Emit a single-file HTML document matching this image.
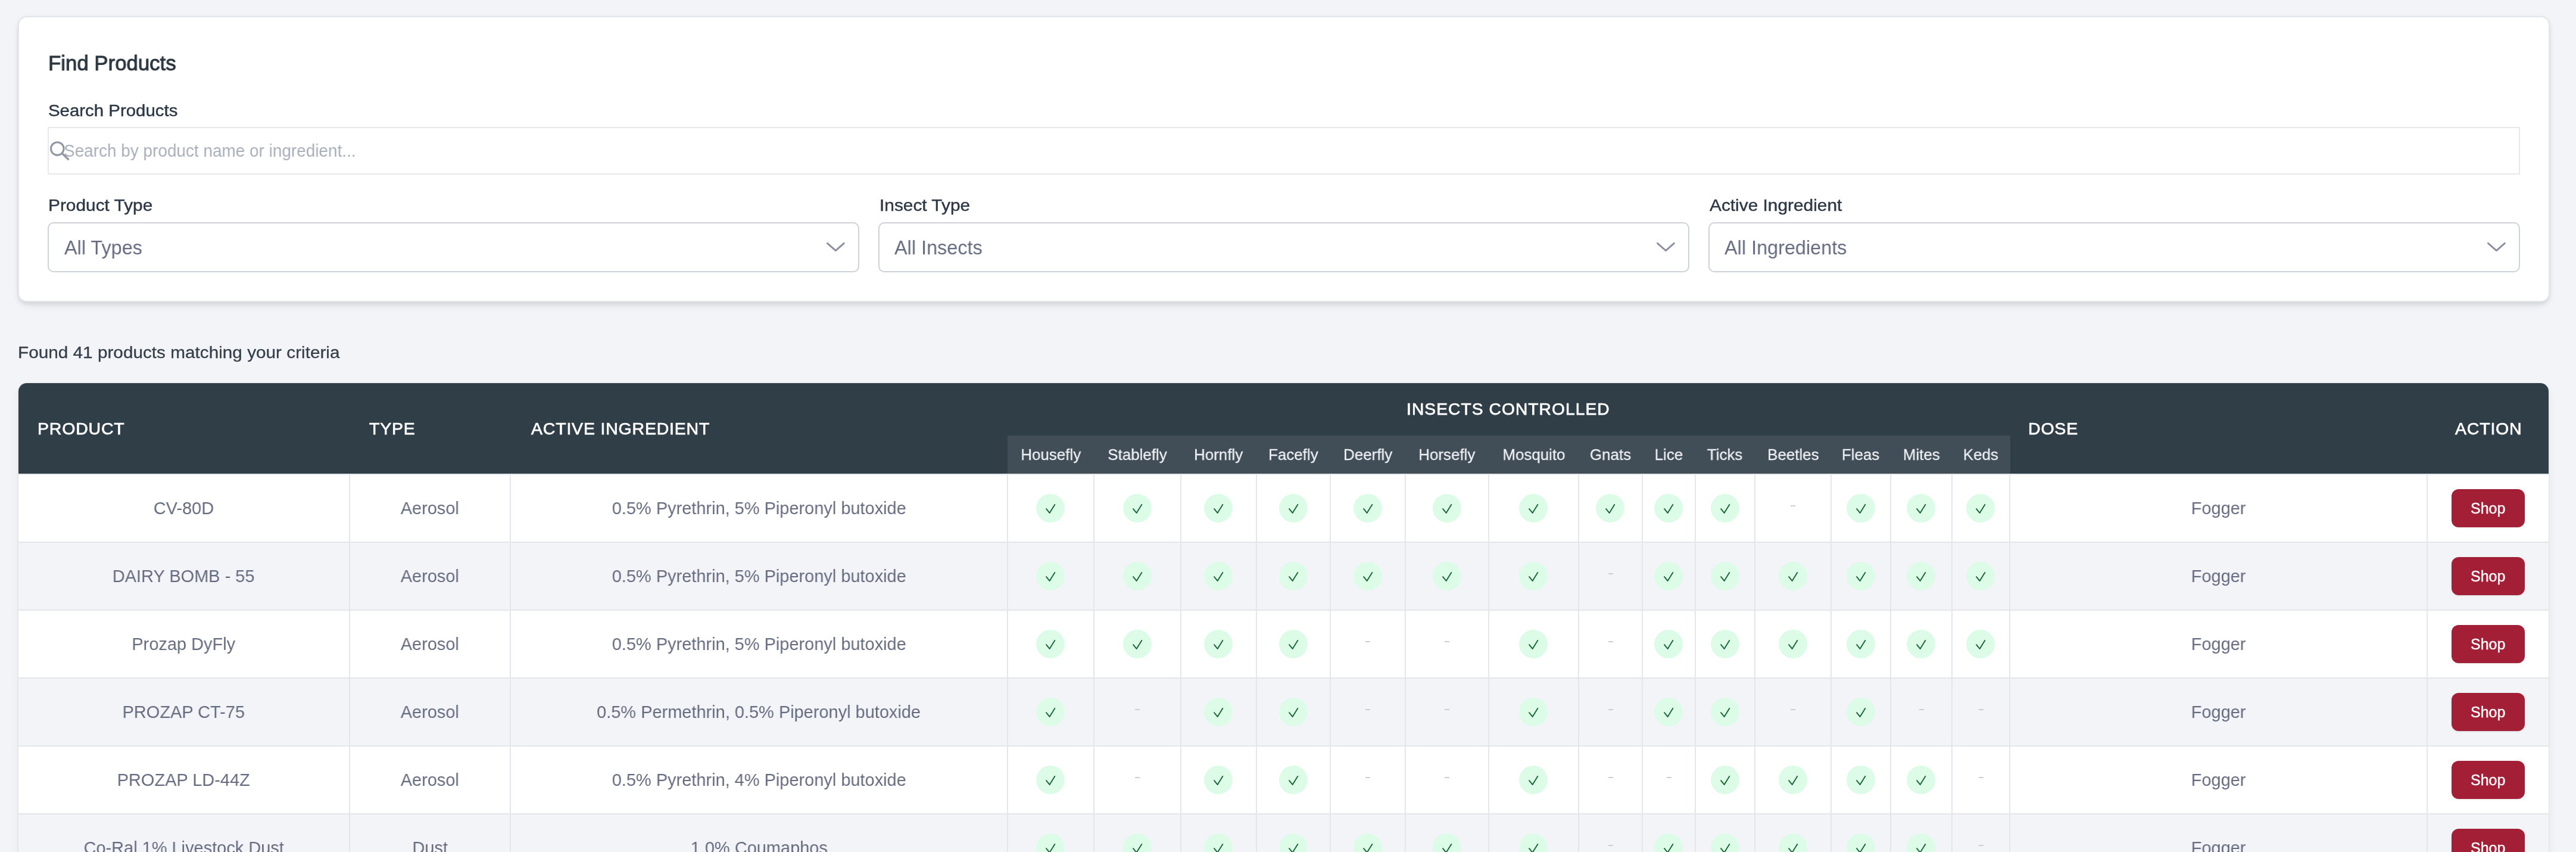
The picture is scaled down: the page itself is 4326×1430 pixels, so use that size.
<!DOCTYPE html><html><head><meta charset="utf-8"><title>Find Products</title><style>*{box-sizing:border-box;margin:0;padding:0}
span{will-change:transform}
html,body{width:4326px;height:1430px;overflow:hidden;background:#f3f4f8;font-family:"Liberation Sans",sans-serif;position:relative}
.t{position:absolute;line-height:1;white-space:nowrap;transform-origin:0 0}
.card{position:absolute;left:30px;top:27px;width:4252px;height:480px;background:#fff;border:2px solid #e2e5ea;border-radius:15px;box-shadow:0 5px 8px -2px rgba(15,23,42,0.10),0 10px 18px -6px rgba(15,23,42,0.07),0 0 10px rgba(15,23,42,0.035)}
.search{position:absolute;left:80px;top:213px;width:4152px;height:80px;border:2px solid #e6e8ed}
.sicon{position:absolute;left:82px;top:235px}
.sel{position:absolute;top:373px;height:84px;border:2px solid #cdd1d8;border-radius:10px}
.chev{position:absolute;top:404px}
.tbl{position:absolute;left:31px;top:643px;width:4249px;height:900px;background:#fff;border-radius:14px 14px 0 0;box-shadow:0 8px 16px rgba(15,23,42,0.06),-1px 0 2px rgba(15,23,42,0.05),1px 0 2px rgba(15,23,42,0.05)}
.thead{position:absolute;left:31px;top:643px;width:4249px;height:152px;background:#303e48;border-radius:14px 14px 0 0}
.subh{position:absolute;top:731px;height:64px;background:#414e58}
.shc,.tdc{position:absolute;display:flex;justify-content:center;line-height:1;white-space:nowrap}
.shc span,.tdc span{display:block;position:relative}
.row{position:absolute;left:31px;width:4249px;height:114px;border-top:2px solid #e3e6eb;background:#fff}
.row.even{background:#f3f4f8}
.vl{position:absolute;width:2px;height:112px;background:#e3e6eb}
.chk{position:absolute;width:48px;height:48px;border-radius:50%;background:#dcfce7}
.chk svg{display:block}
.dash{position:absolute;width:8px;height:2px;background:#ccd0d6}
.shop{position:absolute;width:123px;height:64px;border-radius:12px;background:#a31f36;box-shadow:0 1px 3px rgba(0,0,0,0.10);display:flex;justify-content:center;align-items:center}
.shop span{display:block;position:relative;color:#fff;font-weight:normal;line-height:1;white-space:nowrap}
</style></head><body>
<div class="card"></div>
<span class="t" style="left:81.10px;top:88.60px;font-size:35.80px;font-weight:normal;color:#2b3640;transform:scaleX(0.9720);-webkit-text-stroke:1.0px #2b3640">Find Products</span>
<span class="t" style="left:81.10px;top:171.65px;font-size:27.70px;font-weight:normal;color:#2d3846;transform:scaleX(1.0620);-webkit-text-stroke:0.45px #2d3846">Search Products</span>
<div class="search"></div>
<svg class="sicon" width="40" height="40" viewBox="0 0 40 40"><circle cx="14.3" cy="14.6" r="10.8" fill="none" stroke="#8e97a3" stroke-width="3.1"/><line x1="22" y1="22.3" x2="32.6" y2="32.4" stroke="#8e97a3" stroke-width="3.3" stroke-linecap="round"/></svg>
<span class="t" style="left:107.40px;top:239.37px;font-size:29.10px;font-weight:normal;color:#a8afba;transform:scaleX(0.9600)">Search by product name or ingredient...</span>
<span class="t" style="left:81.10px;top:331.38px;font-size:27.90px;font-weight:normal;color:#2d3846;transform:scaleX(1.0700);-webkit-text-stroke:0.45px #2d3846">Product Type</span>
<div class="sel" style="left:80px;width:1363px"></div>
<span class="t" style="left:107.70px;top:398.78px;font-size:33.10px;font-weight:normal;color:#646b7e;transform:scaleX(0.9800)">All Types</span>
<svg class="chev" style="left:1386px" width="34" height="20" viewBox="0 0 34 20"><polyline points="3.5,4.3 17.4,16.6 31.3,4.3" fill="none" stroke="#8a8fa0" stroke-width="2.9" stroke-linecap="round" stroke-linejoin="round"/></svg>
<span class="t" style="left:1476.50px;top:331.38px;font-size:27.90px;font-weight:normal;color:#2d3846;transform:scaleX(1.0700);-webkit-text-stroke:0.45px #2d3846">Insect Type</span>
<div class="sel" style="left:1475px;width:1362px"></div>
<span class="t" style="left:1501.90px;top:398.78px;font-size:33.10px;font-weight:normal;color:#646b7e;transform:scaleX(0.9800)">All Insects</span>
<svg class="chev" style="left:2780px" width="34" height="20" viewBox="0 0 34 20"><polyline points="3.5,4.3 17.4,16.6 31.3,4.3" fill="none" stroke="#8a8fa0" stroke-width="2.9" stroke-linecap="round" stroke-linejoin="round"/></svg>
<span class="t" style="left:2870.90px;top:331.38px;font-size:27.90px;font-weight:normal;color:#2d3846;transform:scaleX(1.0700);-webkit-text-stroke:0.45px #2d3846">Active Ingredient</span>
<div class="sel" style="left:2869px;width:1363px"></div>
<span class="t" style="left:2896.30px;top:398.78px;font-size:33.10px;font-weight:normal;color:#646b7e;transform:scaleX(0.9800)">All Ingredients</span>
<svg class="chev" style="left:4175px" width="34" height="20" viewBox="0 0 34 20"><polyline points="3.5,4.3 17.4,16.6 31.3,4.3" fill="none" stroke="#8a8fa0" stroke-width="2.9" stroke-linecap="round" stroke-linejoin="round"/></svg>
<span class="t" style="left:29.60px;top:576.83px;font-size:28.20px;font-weight:normal;color:#343f4a;transform:scaleX(1.0550);-webkit-text-stroke:0.3px #343f4a">Found 41 products matching your criteria</span>
<div class="tbl"></div>
<div class="thead"></div>
<div class="subh" style="left:1692px;width:1684px"></div>
<span class="t" style="left:63.10px;top:705.47px;font-size:28.50px;font-weight:normal;color:#ffffff;transform:scaleX(1.0000);-webkit-text-stroke:0.75px #fff;letter-spacing:0.8px">PRODUCT</span>
<span class="t" style="left:620.00px;top:705.47px;font-size:28.50px;font-weight:normal;color:#ffffff;transform:scaleX(1.0000);-webkit-text-stroke:0.75px #fff;letter-spacing:0.8px">TYPE</span>
<span class="t" style="left:891.90px;top:705.47px;font-size:28.50px;font-weight:normal;color:#ffffff;transform:scaleX(1.0000);-webkit-text-stroke:0.75px #fff;letter-spacing:0.8px">ACTIVE INGREDIENT</span>
<span class="t" style="left:3406.00px;top:705.47px;font-size:28.50px;font-weight:normal;color:#ffffff;transform:scaleX(1.0000);-webkit-text-stroke:0.75px #fff;letter-spacing:0.8px">DOSE</span>
<span class="t" style="left:4122.70px;top:705.47px;font-size:28.50px;font-weight:normal;color:#ffffff;transform:scaleX(1.0000);-webkit-text-stroke:0.75px #fff;letter-spacing:0.8px">ACTION</span>
<span class="t" style="left:2362.10px;top:671.83px;font-size:28.20px;font-weight:normal;color:#ffffff;transform:scaleX(1.0000);-webkit-text-stroke:0.75px #fff;letter-spacing:1.06px">INSECTS CONTROLLED</span>
<div class="shc" style="left:1692px;width:145px;top:750.28px"><span style="font-size:26.60px;color:#eef0f3;transform:scaleX(0.9750);-webkit-text-stroke:0.3px #eef0f3">Housefly</span></div>
<div class="shc" style="left:1837px;width:146px;top:750.28px"><span style="font-size:26.60px;color:#eef0f3;transform:scaleX(0.9750);-webkit-text-stroke:0.3px #eef0f3">Stablefly</span></div>
<div class="shc" style="left:1983px;width:127px;top:750.28px"><span style="font-size:26.60px;color:#eef0f3;transform:scaleX(0.9750);-webkit-text-stroke:0.3px #eef0f3">Hornfly</span></div>
<div class="shc" style="left:2110px;width:124px;top:750.28px"><span style="font-size:26.60px;color:#eef0f3;transform:scaleX(0.9750);-webkit-text-stroke:0.3px #eef0f3">Facefly</span></div>
<div class="shc" style="left:2234px;width:126px;top:750.28px"><span style="font-size:26.60px;color:#eef0f3;transform:scaleX(0.9750);-webkit-text-stroke:0.3px #eef0f3">Deerfly</span></div>
<div class="shc" style="left:2360px;width:140px;top:750.28px"><span style="font-size:26.60px;color:#eef0f3;transform:scaleX(0.9750);-webkit-text-stroke:0.3px #eef0f3">Horsefly</span></div>
<div class="shc" style="left:2500px;width:151px;top:750.28px"><span style="font-size:26.60px;color:#eef0f3;transform:scaleX(0.9750);-webkit-text-stroke:0.3px #eef0f3">Mosquito</span></div>
<div class="shc" style="left:2651px;width:107px;top:750.28px"><span style="font-size:26.60px;color:#eef0f3;transform:scaleX(0.9750);-webkit-text-stroke:0.3px #eef0f3">Gnats</span></div>
<div class="shc" style="left:2758px;width:89px;top:750.28px"><span style="font-size:26.60px;color:#eef0f3;transform:scaleX(0.9750);-webkit-text-stroke:0.3px #eef0f3">Lice</span></div>
<div class="shc" style="left:2847px;width:100px;top:750.28px"><span style="font-size:26.60px;color:#eef0f3;transform:scaleX(0.9750);-webkit-text-stroke:0.3px #eef0f3">Ticks</span></div>
<div class="shc" style="left:2947px;width:128px;top:750.28px"><span style="font-size:26.60px;color:#eef0f3;transform:scaleX(0.9750);-webkit-text-stroke:0.3px #eef0f3">Beetles</span></div>
<div class="shc" style="left:3075px;width:100px;top:750.28px"><span style="font-size:26.60px;color:#eef0f3;transform:scaleX(0.9750);-webkit-text-stroke:0.3px #eef0f3">Fleas</span></div>
<div class="shc" style="left:3175px;width:103px;top:750.28px"><span style="font-size:26.60px;color:#eef0f3;transform:scaleX(0.9750);-webkit-text-stroke:0.3px #eef0f3">Mites</span></div>
<div class="shc" style="left:3278px;width:97px;top:750.28px"><span style="font-size:26.60px;color:#eef0f3;transform:scaleX(0.9750);-webkit-text-stroke:0.3px #eef0f3">Keds</span></div>
<div class="row" style="top:795px"></div>
<div class="tdc" style="left:31px;width:555px;top:838.31px"><span style="font-size:29.40px;color:#646b7e;transform:scaleX(0.9850)">CV-80D</span></div>
<div class="vl" style="left:586px;top:797px"></div>
<div class="tdc" style="left:588px;width:268px;top:838.31px"><span style="font-size:29.40px;color:#646b7e;transform:scaleX(0.9850)">Aerosol</span></div>
<div class="vl" style="left:856px;top:797px"></div>
<div class="tdc" style="left:858px;width:833px;top:838.31px"><span style="font-size:29.40px;color:#646b7e;transform:scaleX(0.9850)">0.5% Pyrethrin, 5% Piperonyl butoxide</span></div>
<div class="vl" style="left:1691px;top:797px"></div>
<div class="chk" style="left:1740.0px;top:829.0px"><svg width="48" height="48" viewBox="0 0 48 48"><polyline points="17.1,25.1 22.6,31.9 31.3,17.9" fill="none" stroke="#166534" stroke-width="1.9" stroke-linecap="round" stroke-linejoin="round"/></svg></div>
<div class="vl" style="left:1836px;top:797px"></div>
<div class="chk" style="left:1885.5px;top:829.0px"><svg width="48" height="48" viewBox="0 0 48 48"><polyline points="17.1,25.1 22.6,31.9 31.3,17.9" fill="none" stroke="#166534" stroke-width="1.9" stroke-linecap="round" stroke-linejoin="round"/></svg></div>
<div class="vl" style="left:1982px;top:797px"></div>
<div class="chk" style="left:2022.0px;top:829.0px"><svg width="48" height="48" viewBox="0 0 48 48"><polyline points="17.1,25.1 22.6,31.9 31.3,17.9" fill="none" stroke="#166534" stroke-width="1.9" stroke-linecap="round" stroke-linejoin="round"/></svg></div>
<div class="vl" style="left:2109px;top:797px"></div>
<div class="chk" style="left:2147.5px;top:829.0px"><svg width="48" height="48" viewBox="0 0 48 48"><polyline points="17.1,25.1 22.6,31.9 31.3,17.9" fill="none" stroke="#166534" stroke-width="1.9" stroke-linecap="round" stroke-linejoin="round"/></svg></div>
<div class="vl" style="left:2233px;top:797px"></div>
<div class="chk" style="left:2272.5px;top:829.0px"><svg width="48" height="48" viewBox="0 0 48 48"><polyline points="17.1,25.1 22.6,31.9 31.3,17.9" fill="none" stroke="#166534" stroke-width="1.9" stroke-linecap="round" stroke-linejoin="round"/></svg></div>
<div class="vl" style="left:2359px;top:797px"></div>
<div class="chk" style="left:2405.5px;top:829.0px"><svg width="48" height="48" viewBox="0 0 48 48"><polyline points="17.1,25.1 22.6,31.9 31.3,17.9" fill="none" stroke="#166534" stroke-width="1.9" stroke-linecap="round" stroke-linejoin="round"/></svg></div>
<div class="vl" style="left:2499px;top:797px"></div>
<div class="chk" style="left:2551.0px;top:829.0px"><svg width="48" height="48" viewBox="0 0 48 48"><polyline points="17.1,25.1 22.6,31.9 31.3,17.9" fill="none" stroke="#166534" stroke-width="1.9" stroke-linecap="round" stroke-linejoin="round"/></svg></div>
<div class="vl" style="left:2650px;top:797px"></div>
<div class="chk" style="left:2680.0px;top:829.0px"><svg width="48" height="48" viewBox="0 0 48 48"><polyline points="17.1,25.1 22.6,31.9 31.3,17.9" fill="none" stroke="#166534" stroke-width="1.9" stroke-linecap="round" stroke-linejoin="round"/></svg></div>
<div class="vl" style="left:2757px;top:797px"></div>
<div class="chk" style="left:2778.0px;top:829.0px"><svg width="48" height="48" viewBox="0 0 48 48"><polyline points="17.1,25.1 22.6,31.9 31.3,17.9" fill="none" stroke="#166534" stroke-width="1.9" stroke-linecap="round" stroke-linejoin="round"/></svg></div>
<div class="vl" style="left:2846px;top:797px"></div>
<div class="chk" style="left:2872.5px;top:829.0px"><svg width="48" height="48" viewBox="0 0 48 48"><polyline points="17.1,25.1 22.6,31.9 31.3,17.9" fill="none" stroke="#166534" stroke-width="1.9" stroke-linecap="round" stroke-linejoin="round"/></svg></div>
<div class="vl" style="left:2946px;top:797px"></div>
<div class="dash" style="left:3007.0px;top:848.0px"></div>
<div class="vl" style="left:3074px;top:797px"></div>
<div class="chk" style="left:3100.5px;top:829.0px"><svg width="48" height="48" viewBox="0 0 48 48"><polyline points="17.1,25.1 22.6,31.9 31.3,17.9" fill="none" stroke="#166534" stroke-width="1.9" stroke-linecap="round" stroke-linejoin="round"/></svg></div>
<div class="vl" style="left:3174px;top:797px"></div>
<div class="chk" style="left:3202.0px;top:829.0px"><svg width="48" height="48" viewBox="0 0 48 48"><polyline points="17.1,25.1 22.6,31.9 31.3,17.9" fill="none" stroke="#166534" stroke-width="1.9" stroke-linecap="round" stroke-linejoin="round"/></svg></div>
<div class="vl" style="left:3277px;top:797px"></div>
<div class="chk" style="left:3302.0px;top:829.0px"><svg width="48" height="48" viewBox="0 0 48 48"><polyline points="17.1,25.1 22.6,31.9 31.3,17.9" fill="none" stroke="#166534" stroke-width="1.9" stroke-linecap="round" stroke-linejoin="round"/></svg></div>
<div class="vl" style="left:3374px;top:797px"></div>
<div class="tdc" style="left:3376px;width:699px;top:838.31px"><span style="font-size:29.40px;color:#646b7e;transform:scaleX(0.9850)">Fogger</span></div>
<div class="vl" style="left:4075px;top:797px"></div>
<div class="shop" style="left:4117.0px;top:821.0px"><span style="font-size:25.00px;transform:scaleX(1.0000);top:0.90px;-webkit-text-stroke:0.4px #fff">Shop</span></div>
<div class="row even" style="top:909px"></div>
<div class="tdc" style="left:31px;width:555px;top:952.31px"><span style="font-size:29.40px;color:#646b7e;transform:scaleX(0.9850)">DAIRY BOMB - 55</span></div>
<div class="vl" style="left:586px;top:911px"></div>
<div class="tdc" style="left:588px;width:268px;top:952.31px"><span style="font-size:29.40px;color:#646b7e;transform:scaleX(0.9850)">Aerosol</span></div>
<div class="vl" style="left:856px;top:911px"></div>
<div class="tdc" style="left:858px;width:833px;top:952.31px"><span style="font-size:29.40px;color:#646b7e;transform:scaleX(0.9850)">0.5% Pyrethrin, 5% Piperonyl butoxide</span></div>
<div class="vl" style="left:1691px;top:911px"></div>
<div class="chk" style="left:1740.0px;top:943.0px"><svg width="48" height="48" viewBox="0 0 48 48"><polyline points="17.1,25.1 22.6,31.9 31.3,17.9" fill="none" stroke="#166534" stroke-width="1.9" stroke-linecap="round" stroke-linejoin="round"/></svg></div>
<div class="vl" style="left:1836px;top:911px"></div>
<div class="chk" style="left:1885.5px;top:943.0px"><svg width="48" height="48" viewBox="0 0 48 48"><polyline points="17.1,25.1 22.6,31.9 31.3,17.9" fill="none" stroke="#166534" stroke-width="1.9" stroke-linecap="round" stroke-linejoin="round"/></svg></div>
<div class="vl" style="left:1982px;top:911px"></div>
<div class="chk" style="left:2022.0px;top:943.0px"><svg width="48" height="48" viewBox="0 0 48 48"><polyline points="17.1,25.1 22.6,31.9 31.3,17.9" fill="none" stroke="#166534" stroke-width="1.9" stroke-linecap="round" stroke-linejoin="round"/></svg></div>
<div class="vl" style="left:2109px;top:911px"></div>
<div class="chk" style="left:2147.5px;top:943.0px"><svg width="48" height="48" viewBox="0 0 48 48"><polyline points="17.1,25.1 22.6,31.9 31.3,17.9" fill="none" stroke="#166534" stroke-width="1.9" stroke-linecap="round" stroke-linejoin="round"/></svg></div>
<div class="vl" style="left:2233px;top:911px"></div>
<div class="chk" style="left:2272.5px;top:943.0px"><svg width="48" height="48" viewBox="0 0 48 48"><polyline points="17.1,25.1 22.6,31.9 31.3,17.9" fill="none" stroke="#166534" stroke-width="1.9" stroke-linecap="round" stroke-linejoin="round"/></svg></div>
<div class="vl" style="left:2359px;top:911px"></div>
<div class="chk" style="left:2405.5px;top:943.0px"><svg width="48" height="48" viewBox="0 0 48 48"><polyline points="17.1,25.1 22.6,31.9 31.3,17.9" fill="none" stroke="#166534" stroke-width="1.9" stroke-linecap="round" stroke-linejoin="round"/></svg></div>
<div class="vl" style="left:2499px;top:911px"></div>
<div class="chk" style="left:2551.0px;top:943.0px"><svg width="48" height="48" viewBox="0 0 48 48"><polyline points="17.1,25.1 22.6,31.9 31.3,17.9" fill="none" stroke="#166534" stroke-width="1.9" stroke-linecap="round" stroke-linejoin="round"/></svg></div>
<div class="vl" style="left:2650px;top:911px"></div>
<div class="dash" style="left:2700.5px;top:962.0px"></div>
<div class="vl" style="left:2757px;top:911px"></div>
<div class="chk" style="left:2778.0px;top:943.0px"><svg width="48" height="48" viewBox="0 0 48 48"><polyline points="17.1,25.1 22.6,31.9 31.3,17.9" fill="none" stroke="#166534" stroke-width="1.9" stroke-linecap="round" stroke-linejoin="round"/></svg></div>
<div class="vl" style="left:2846px;top:911px"></div>
<div class="chk" style="left:2872.5px;top:943.0px"><svg width="48" height="48" viewBox="0 0 48 48"><polyline points="17.1,25.1 22.6,31.9 31.3,17.9" fill="none" stroke="#166534" stroke-width="1.9" stroke-linecap="round" stroke-linejoin="round"/></svg></div>
<div class="vl" style="left:2946px;top:911px"></div>
<div class="chk" style="left:2986.5px;top:943.0px"><svg width="48" height="48" viewBox="0 0 48 48"><polyline points="17.1,25.1 22.6,31.9 31.3,17.9" fill="none" stroke="#166534" stroke-width="1.9" stroke-linecap="round" stroke-linejoin="round"/></svg></div>
<div class="vl" style="left:3074px;top:911px"></div>
<div class="chk" style="left:3100.5px;top:943.0px"><svg width="48" height="48" viewBox="0 0 48 48"><polyline points="17.1,25.1 22.6,31.9 31.3,17.9" fill="none" stroke="#166534" stroke-width="1.9" stroke-linecap="round" stroke-linejoin="round"/></svg></div>
<div class="vl" style="left:3174px;top:911px"></div>
<div class="chk" style="left:3202.0px;top:943.0px"><svg width="48" height="48" viewBox="0 0 48 48"><polyline points="17.1,25.1 22.6,31.9 31.3,17.9" fill="none" stroke="#166534" stroke-width="1.9" stroke-linecap="round" stroke-linejoin="round"/></svg></div>
<div class="vl" style="left:3277px;top:911px"></div>
<div class="chk" style="left:3302.0px;top:943.0px"><svg width="48" height="48" viewBox="0 0 48 48"><polyline points="17.1,25.1 22.6,31.9 31.3,17.9" fill="none" stroke="#166534" stroke-width="1.9" stroke-linecap="round" stroke-linejoin="round"/></svg></div>
<div class="vl" style="left:3374px;top:911px"></div>
<div class="tdc" style="left:3376px;width:699px;top:952.31px"><span style="font-size:29.40px;color:#646b7e;transform:scaleX(0.9850)">Fogger</span></div>
<div class="vl" style="left:4075px;top:911px"></div>
<div class="shop" style="left:4117.0px;top:935.0px"><span style="font-size:25.00px;transform:scaleX(1.0000);top:0.90px;-webkit-text-stroke:0.4px #fff">Shop</span></div>
<div class="row" style="top:1023px"></div>
<div class="tdc" style="left:31px;width:555px;top:1066.31px"><span style="font-size:29.40px;color:#646b7e;transform:scaleX(0.9850)">Prozap DyFly</span></div>
<div class="vl" style="left:586px;top:1025px"></div>
<div class="tdc" style="left:588px;width:268px;top:1066.31px"><span style="font-size:29.40px;color:#646b7e;transform:scaleX(0.9850)">Aerosol</span></div>
<div class="vl" style="left:856px;top:1025px"></div>
<div class="tdc" style="left:858px;width:833px;top:1066.31px"><span style="font-size:29.40px;color:#646b7e;transform:scaleX(0.9850)">0.5% Pyrethrin, 5% Piperonyl butoxide</span></div>
<div class="vl" style="left:1691px;top:1025px"></div>
<div class="chk" style="left:1740.0px;top:1057.0px"><svg width="48" height="48" viewBox="0 0 48 48"><polyline points="17.1,25.1 22.6,31.9 31.3,17.9" fill="none" stroke="#166534" stroke-width="1.9" stroke-linecap="round" stroke-linejoin="round"/></svg></div>
<div class="vl" style="left:1836px;top:1025px"></div>
<div class="chk" style="left:1885.5px;top:1057.0px"><svg width="48" height="48" viewBox="0 0 48 48"><polyline points="17.1,25.1 22.6,31.9 31.3,17.9" fill="none" stroke="#166534" stroke-width="1.9" stroke-linecap="round" stroke-linejoin="round"/></svg></div>
<div class="vl" style="left:1982px;top:1025px"></div>
<div class="chk" style="left:2022.0px;top:1057.0px"><svg width="48" height="48" viewBox="0 0 48 48"><polyline points="17.1,25.1 22.6,31.9 31.3,17.9" fill="none" stroke="#166534" stroke-width="1.9" stroke-linecap="round" stroke-linejoin="round"/></svg></div>
<div class="vl" style="left:2109px;top:1025px"></div>
<div class="chk" style="left:2147.5px;top:1057.0px"><svg width="48" height="48" viewBox="0 0 48 48"><polyline points="17.1,25.1 22.6,31.9 31.3,17.9" fill="none" stroke="#166534" stroke-width="1.9" stroke-linecap="round" stroke-linejoin="round"/></svg></div>
<div class="vl" style="left:2233px;top:1025px"></div>
<div class="dash" style="left:2293.0px;top:1076.0px"></div>
<div class="vl" style="left:2359px;top:1025px"></div>
<div class="dash" style="left:2426.0px;top:1076.0px"></div>
<div class="vl" style="left:2499px;top:1025px"></div>
<div class="chk" style="left:2551.0px;top:1057.0px"><svg width="48" height="48" viewBox="0 0 48 48"><polyline points="17.1,25.1 22.6,31.9 31.3,17.9" fill="none" stroke="#166534" stroke-width="1.9" stroke-linecap="round" stroke-linejoin="round"/></svg></div>
<div class="vl" style="left:2650px;top:1025px"></div>
<div class="dash" style="left:2700.5px;top:1076.0px"></div>
<div class="vl" style="left:2757px;top:1025px"></div>
<div class="chk" style="left:2778.0px;top:1057.0px"><svg width="48" height="48" viewBox="0 0 48 48"><polyline points="17.1,25.1 22.6,31.9 31.3,17.9" fill="none" stroke="#166534" stroke-width="1.9" stroke-linecap="round" stroke-linejoin="round"/></svg></div>
<div class="vl" style="left:2846px;top:1025px"></div>
<div class="chk" style="left:2872.5px;top:1057.0px"><svg width="48" height="48" viewBox="0 0 48 48"><polyline points="17.1,25.1 22.6,31.9 31.3,17.9" fill="none" stroke="#166534" stroke-width="1.9" stroke-linecap="round" stroke-linejoin="round"/></svg></div>
<div class="vl" style="left:2946px;top:1025px"></div>
<div class="chk" style="left:2986.5px;top:1057.0px"><svg width="48" height="48" viewBox="0 0 48 48"><polyline points="17.1,25.1 22.6,31.9 31.3,17.9" fill="none" stroke="#166534" stroke-width="1.9" stroke-linecap="round" stroke-linejoin="round"/></svg></div>
<div class="vl" style="left:3074px;top:1025px"></div>
<div class="chk" style="left:3100.5px;top:1057.0px"><svg width="48" height="48" viewBox="0 0 48 48"><polyline points="17.1,25.1 22.6,31.9 31.3,17.9" fill="none" stroke="#166534" stroke-width="1.9" stroke-linecap="round" stroke-linejoin="round"/></svg></div>
<div class="vl" style="left:3174px;top:1025px"></div>
<div class="chk" style="left:3202.0px;top:1057.0px"><svg width="48" height="48" viewBox="0 0 48 48"><polyline points="17.1,25.1 22.6,31.9 31.3,17.9" fill="none" stroke="#166534" stroke-width="1.9" stroke-linecap="round" stroke-linejoin="round"/></svg></div>
<div class="vl" style="left:3277px;top:1025px"></div>
<div class="chk" style="left:3302.0px;top:1057.0px"><svg width="48" height="48" viewBox="0 0 48 48"><polyline points="17.1,25.1 22.6,31.9 31.3,17.9" fill="none" stroke="#166534" stroke-width="1.9" stroke-linecap="round" stroke-linejoin="round"/></svg></div>
<div class="vl" style="left:3374px;top:1025px"></div>
<div class="tdc" style="left:3376px;width:699px;top:1066.31px"><span style="font-size:29.40px;color:#646b7e;transform:scaleX(0.9850)">Fogger</span></div>
<div class="vl" style="left:4075px;top:1025px"></div>
<div class="shop" style="left:4117.0px;top:1049.0px"><span style="font-size:25.00px;transform:scaleX(1.0000);top:0.90px;-webkit-text-stroke:0.4px #fff">Shop</span></div>
<div class="row even" style="top:1137px"></div>
<div class="tdc" style="left:31px;width:555px;top:1180.31px"><span style="font-size:29.40px;color:#646b7e;transform:scaleX(0.9850)">PROZAP CT-75</span></div>
<div class="vl" style="left:586px;top:1139px"></div>
<div class="tdc" style="left:588px;width:268px;top:1180.31px"><span style="font-size:29.40px;color:#646b7e;transform:scaleX(0.9850)">Aerosol</span></div>
<div class="vl" style="left:856px;top:1139px"></div>
<div class="tdc" style="left:858px;width:833px;top:1180.31px"><span style="font-size:29.40px;color:#646b7e;transform:scaleX(0.9850)">0.5% Permethrin, 0.5% Piperonyl butoxide</span></div>
<div class="vl" style="left:1691px;top:1139px"></div>
<div class="chk" style="left:1740.0px;top:1171.0px"><svg width="48" height="48" viewBox="0 0 48 48"><polyline points="17.1,25.1 22.6,31.9 31.3,17.9" fill="none" stroke="#166534" stroke-width="1.9" stroke-linecap="round" stroke-linejoin="round"/></svg></div>
<div class="vl" style="left:1836px;top:1139px"></div>
<div class="dash" style="left:1906.0px;top:1190.0px"></div>
<div class="vl" style="left:1982px;top:1139px"></div>
<div class="chk" style="left:2022.0px;top:1171.0px"><svg width="48" height="48" viewBox="0 0 48 48"><polyline points="17.1,25.1 22.6,31.9 31.3,17.9" fill="none" stroke="#166534" stroke-width="1.9" stroke-linecap="round" stroke-linejoin="round"/></svg></div>
<div class="vl" style="left:2109px;top:1139px"></div>
<div class="chk" style="left:2147.5px;top:1171.0px"><svg width="48" height="48" viewBox="0 0 48 48"><polyline points="17.1,25.1 22.6,31.9 31.3,17.9" fill="none" stroke="#166534" stroke-width="1.9" stroke-linecap="round" stroke-linejoin="round"/></svg></div>
<div class="vl" style="left:2233px;top:1139px"></div>
<div class="dash" style="left:2293.0px;top:1190.0px"></div>
<div class="vl" style="left:2359px;top:1139px"></div>
<div class="dash" style="left:2426.0px;top:1190.0px"></div>
<div class="vl" style="left:2499px;top:1139px"></div>
<div class="chk" style="left:2551.0px;top:1171.0px"><svg width="48" height="48" viewBox="0 0 48 48"><polyline points="17.1,25.1 22.6,31.9 31.3,17.9" fill="none" stroke="#166534" stroke-width="1.9" stroke-linecap="round" stroke-linejoin="round"/></svg></div>
<div class="vl" style="left:2650px;top:1139px"></div>
<div class="dash" style="left:2700.5px;top:1190.0px"></div>
<div class="vl" style="left:2757px;top:1139px"></div>
<div class="chk" style="left:2778.0px;top:1171.0px"><svg width="48" height="48" viewBox="0 0 48 48"><polyline points="17.1,25.1 22.6,31.9 31.3,17.9" fill="none" stroke="#166534" stroke-width="1.9" stroke-linecap="round" stroke-linejoin="round"/></svg></div>
<div class="vl" style="left:2846px;top:1139px"></div>
<div class="chk" style="left:2872.5px;top:1171.0px"><svg width="48" height="48" viewBox="0 0 48 48"><polyline points="17.1,25.1 22.6,31.9 31.3,17.9" fill="none" stroke="#166534" stroke-width="1.9" stroke-linecap="round" stroke-linejoin="round"/></svg></div>
<div class="vl" style="left:2946px;top:1139px"></div>
<div class="dash" style="left:3007.0px;top:1190.0px"></div>
<div class="vl" style="left:3074px;top:1139px"></div>
<div class="chk" style="left:3100.5px;top:1171.0px"><svg width="48" height="48" viewBox="0 0 48 48"><polyline points="17.1,25.1 22.6,31.9 31.3,17.9" fill="none" stroke="#166534" stroke-width="1.9" stroke-linecap="round" stroke-linejoin="round"/></svg></div>
<div class="vl" style="left:3174px;top:1139px"></div>
<div class="dash" style="left:3222.5px;top:1190.0px"></div>
<div class="vl" style="left:3277px;top:1139px"></div>
<div class="dash" style="left:3322.5px;top:1190.0px"></div>
<div class="vl" style="left:3374px;top:1139px"></div>
<div class="tdc" style="left:3376px;width:699px;top:1180.31px"><span style="font-size:29.40px;color:#646b7e;transform:scaleX(0.9850)">Fogger</span></div>
<div class="vl" style="left:4075px;top:1139px"></div>
<div class="shop" style="left:4117.0px;top:1163.0px"><span style="font-size:25.00px;transform:scaleX(1.0000);top:0.90px;-webkit-text-stroke:0.4px #fff">Shop</span></div>
<div class="row" style="top:1251px"></div>
<div class="tdc" style="left:31px;width:555px;top:1294.31px"><span style="font-size:29.40px;color:#646b7e;transform:scaleX(0.9850)">PROZAP LD-44Z</span></div>
<div class="vl" style="left:586px;top:1253px"></div>
<div class="tdc" style="left:588px;width:268px;top:1294.31px"><span style="font-size:29.40px;color:#646b7e;transform:scaleX(0.9850)">Aerosol</span></div>
<div class="vl" style="left:856px;top:1253px"></div>
<div class="tdc" style="left:858px;width:833px;top:1294.31px"><span style="font-size:29.40px;color:#646b7e;transform:scaleX(0.9850)">0.5% Pyrethrin, 4% Piperonyl butoxide</span></div>
<div class="vl" style="left:1691px;top:1253px"></div>
<div class="chk" style="left:1740.0px;top:1285.0px"><svg width="48" height="48" viewBox="0 0 48 48"><polyline points="17.1,25.1 22.6,31.9 31.3,17.9" fill="none" stroke="#166534" stroke-width="1.9" stroke-linecap="round" stroke-linejoin="round"/></svg></div>
<div class="vl" style="left:1836px;top:1253px"></div>
<div class="dash" style="left:1906.0px;top:1304.0px"></div>
<div class="vl" style="left:1982px;top:1253px"></div>
<div class="chk" style="left:2022.0px;top:1285.0px"><svg width="48" height="48" viewBox="0 0 48 48"><polyline points="17.1,25.1 22.6,31.9 31.3,17.9" fill="none" stroke="#166534" stroke-width="1.9" stroke-linecap="round" stroke-linejoin="round"/></svg></div>
<div class="vl" style="left:2109px;top:1253px"></div>
<div class="chk" style="left:2147.5px;top:1285.0px"><svg width="48" height="48" viewBox="0 0 48 48"><polyline points="17.1,25.1 22.6,31.9 31.3,17.9" fill="none" stroke="#166534" stroke-width="1.9" stroke-linecap="round" stroke-linejoin="round"/></svg></div>
<div class="vl" style="left:2233px;top:1253px"></div>
<div class="dash" style="left:2293.0px;top:1304.0px"></div>
<div class="vl" style="left:2359px;top:1253px"></div>
<div class="dash" style="left:2426.0px;top:1304.0px"></div>
<div class="vl" style="left:2499px;top:1253px"></div>
<div class="chk" style="left:2551.0px;top:1285.0px"><svg width="48" height="48" viewBox="0 0 48 48"><polyline points="17.1,25.1 22.6,31.9 31.3,17.9" fill="none" stroke="#166534" stroke-width="1.9" stroke-linecap="round" stroke-linejoin="round"/></svg></div>
<div class="vl" style="left:2650px;top:1253px"></div>
<div class="dash" style="left:2700.5px;top:1304.0px"></div>
<div class="vl" style="left:2757px;top:1253px"></div>
<div class="dash" style="left:2798.5px;top:1304.0px"></div>
<div class="vl" style="left:2846px;top:1253px"></div>
<div class="chk" style="left:2872.5px;top:1285.0px"><svg width="48" height="48" viewBox="0 0 48 48"><polyline points="17.1,25.1 22.6,31.9 31.3,17.9" fill="none" stroke="#166534" stroke-width="1.9" stroke-linecap="round" stroke-linejoin="round"/></svg></div>
<div class="vl" style="left:2946px;top:1253px"></div>
<div class="chk" style="left:2986.5px;top:1285.0px"><svg width="48" height="48" viewBox="0 0 48 48"><polyline points="17.1,25.1 22.6,31.9 31.3,17.9" fill="none" stroke="#166534" stroke-width="1.9" stroke-linecap="round" stroke-linejoin="round"/></svg></div>
<div class="vl" style="left:3074px;top:1253px"></div>
<div class="chk" style="left:3100.5px;top:1285.0px"><svg width="48" height="48" viewBox="0 0 48 48"><polyline points="17.1,25.1 22.6,31.9 31.3,17.9" fill="none" stroke="#166534" stroke-width="1.9" stroke-linecap="round" stroke-linejoin="round"/></svg></div>
<div class="vl" style="left:3174px;top:1253px"></div>
<div class="chk" style="left:3202.0px;top:1285.0px"><svg width="48" height="48" viewBox="0 0 48 48"><polyline points="17.1,25.1 22.6,31.9 31.3,17.9" fill="none" stroke="#166534" stroke-width="1.9" stroke-linecap="round" stroke-linejoin="round"/></svg></div>
<div class="vl" style="left:3277px;top:1253px"></div>
<div class="dash" style="left:3322.5px;top:1304.0px"></div>
<div class="vl" style="left:3374px;top:1253px"></div>
<div class="tdc" style="left:3376px;width:699px;top:1294.31px"><span style="font-size:29.40px;color:#646b7e;transform:scaleX(0.9850)">Fogger</span></div>
<div class="vl" style="left:4075px;top:1253px"></div>
<div class="shop" style="left:4117.0px;top:1277.0px"><span style="font-size:25.00px;transform:scaleX(1.0000);top:0.90px;-webkit-text-stroke:0.4px #fff">Shop</span></div>
<div class="row even" style="top:1365px"></div>
<div class="tdc" style="left:31px;width:555px;top:1408.31px"><span style="font-size:29.40px;color:#646b7e;transform:scaleX(0.9850)">Co-Ral 1% Livestock Dust</span></div>
<div class="vl" style="left:586px;top:1367px"></div>
<div class="tdc" style="left:588px;width:268px;top:1408.31px"><span style="font-size:29.40px;color:#646b7e;transform:scaleX(0.9850)">Dust</span></div>
<div class="vl" style="left:856px;top:1367px"></div>
<div class="tdc" style="left:858px;width:833px;top:1408.31px"><span style="font-size:29.40px;color:#646b7e;transform:scaleX(0.9850)">1.0% Coumaphos</span></div>
<div class="vl" style="left:1691px;top:1367px"></div>
<div class="chk" style="left:1740.0px;top:1399.0px"><svg width="48" height="48" viewBox="0 0 48 48"><polyline points="17.1,25.1 22.6,31.9 31.3,17.9" fill="none" stroke="#166534" stroke-width="1.9" stroke-linecap="round" stroke-linejoin="round"/></svg></div>
<div class="vl" style="left:1836px;top:1367px"></div>
<div class="chk" style="left:1885.5px;top:1399.0px"><svg width="48" height="48" viewBox="0 0 48 48"><polyline points="17.1,25.1 22.6,31.9 31.3,17.9" fill="none" stroke="#166534" stroke-width="1.9" stroke-linecap="round" stroke-linejoin="round"/></svg></div>
<div class="vl" style="left:1982px;top:1367px"></div>
<div class="chk" style="left:2022.0px;top:1399.0px"><svg width="48" height="48" viewBox="0 0 48 48"><polyline points="17.1,25.1 22.6,31.9 31.3,17.9" fill="none" stroke="#166534" stroke-width="1.9" stroke-linecap="round" stroke-linejoin="round"/></svg></div>
<div class="vl" style="left:2109px;top:1367px"></div>
<div class="chk" style="left:2147.5px;top:1399.0px"><svg width="48" height="48" viewBox="0 0 48 48"><polyline points="17.1,25.1 22.6,31.9 31.3,17.9" fill="none" stroke="#166534" stroke-width="1.9" stroke-linecap="round" stroke-linejoin="round"/></svg></div>
<div class="vl" style="left:2233px;top:1367px"></div>
<div class="chk" style="left:2272.5px;top:1399.0px"><svg width="48" height="48" viewBox="0 0 48 48"><polyline points="17.1,25.1 22.6,31.9 31.3,17.9" fill="none" stroke="#166534" stroke-width="1.9" stroke-linecap="round" stroke-linejoin="round"/></svg></div>
<div class="vl" style="left:2359px;top:1367px"></div>
<div class="chk" style="left:2405.5px;top:1399.0px"><svg width="48" height="48" viewBox="0 0 48 48"><polyline points="17.1,25.1 22.6,31.9 31.3,17.9" fill="none" stroke="#166534" stroke-width="1.9" stroke-linecap="round" stroke-linejoin="round"/></svg></div>
<div class="vl" style="left:2499px;top:1367px"></div>
<div class="chk" style="left:2551.0px;top:1399.0px"><svg width="48" height="48" viewBox="0 0 48 48"><polyline points="17.1,25.1 22.6,31.9 31.3,17.9" fill="none" stroke="#166534" stroke-width="1.9" stroke-linecap="round" stroke-linejoin="round"/></svg></div>
<div class="vl" style="left:2650px;top:1367px"></div>
<div class="dash" style="left:2700.5px;top:1418.0px"></div>
<div class="vl" style="left:2757px;top:1367px"></div>
<div class="chk" style="left:2778.0px;top:1399.0px"><svg width="48" height="48" viewBox="0 0 48 48"><polyline points="17.1,25.1 22.6,31.9 31.3,17.9" fill="none" stroke="#166534" stroke-width="1.9" stroke-linecap="round" stroke-linejoin="round"/></svg></div>
<div class="vl" style="left:2846px;top:1367px"></div>
<div class="chk" style="left:2872.5px;top:1399.0px"><svg width="48" height="48" viewBox="0 0 48 48"><polyline points="17.1,25.1 22.6,31.9 31.3,17.9" fill="none" stroke="#166534" stroke-width="1.9" stroke-linecap="round" stroke-linejoin="round"/></svg></div>
<div class="vl" style="left:2946px;top:1367px"></div>
<div class="chk" style="left:2986.5px;top:1399.0px"><svg width="48" height="48" viewBox="0 0 48 48"><polyline points="17.1,25.1 22.6,31.9 31.3,17.9" fill="none" stroke="#166534" stroke-width="1.9" stroke-linecap="round" stroke-linejoin="round"/></svg></div>
<div class="vl" style="left:3074px;top:1367px"></div>
<div class="chk" style="left:3100.5px;top:1399.0px"><svg width="48" height="48" viewBox="0 0 48 48"><polyline points="17.1,25.1 22.6,31.9 31.3,17.9" fill="none" stroke="#166534" stroke-width="1.9" stroke-linecap="round" stroke-linejoin="round"/></svg></div>
<div class="vl" style="left:3174px;top:1367px"></div>
<div class="chk" style="left:3202.0px;top:1399.0px"><svg width="48" height="48" viewBox="0 0 48 48"><polyline points="17.1,25.1 22.6,31.9 31.3,17.9" fill="none" stroke="#166534" stroke-width="1.9" stroke-linecap="round" stroke-linejoin="round"/></svg></div>
<div class="vl" style="left:3277px;top:1367px"></div>
<div class="dash" style="left:3322.5px;top:1418.0px"></div>
<div class="vl" style="left:3374px;top:1367px"></div>
<div class="tdc" style="left:3376px;width:699px;top:1408.31px"><span style="font-size:29.40px;color:#646b7e;transform:scaleX(0.9850)">Fogger</span></div>
<div class="vl" style="left:4075px;top:1367px"></div>
<div class="shop" style="left:4117.0px;top:1391.0px"><span style="font-size:25.00px;transform:scaleX(1.0000);top:0.90px;-webkit-text-stroke:0.4px #fff">Shop</span></div>
</body></html>
